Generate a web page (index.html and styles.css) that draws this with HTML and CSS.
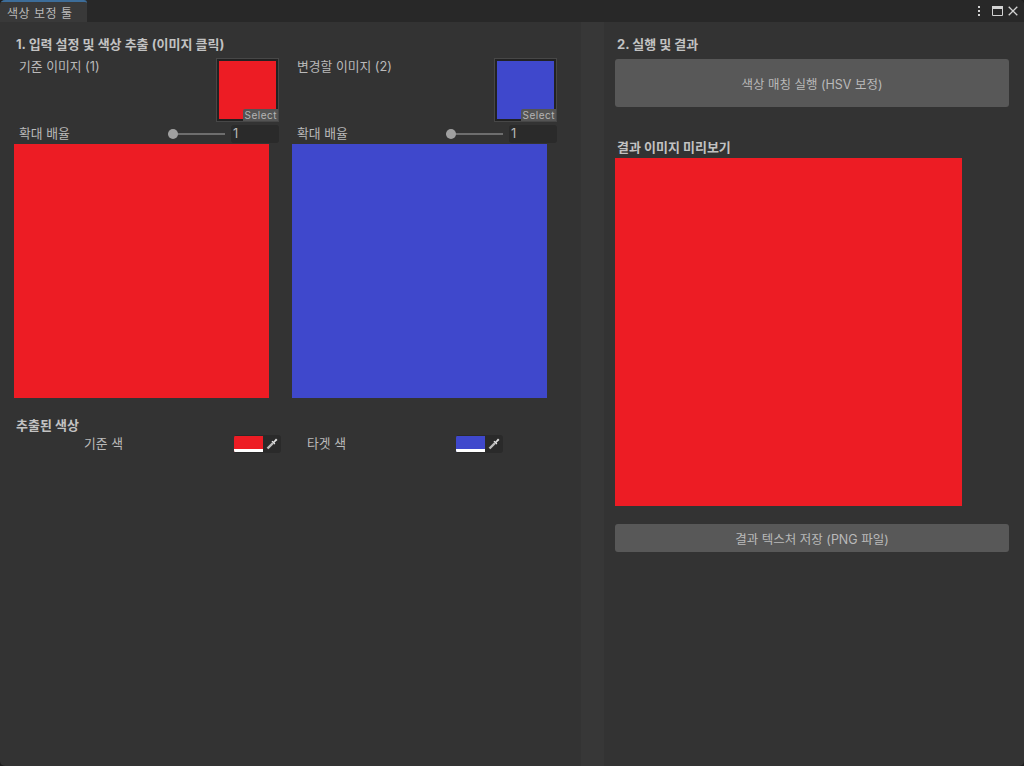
FILE: index.html
```html
<!DOCTYPE html>
<html lang="ko">
<head>
  <meta charset="UTF-8" />
  <title>색상 보정 툴</title>
  <link rel="stylesheet" href="styles.css">
</head>
<body>
  <div class="window">
    <!-- Tab bar -->
    <div class="tabbar">
      <div class="tab">색상 보정 툴</div>
      <div class="tab-actions">
        <svg class="icon-more" width="4" height="10" viewBox="0 0 4 10"><path d="M1 0h2v2H1zM1 4h2v2H1zM1 8h2v2H1z" fill="#d2d2d2"/></svg>
        <svg width="11" height="10" viewBox="0 0 11 10"><path d="M.5.5h10v9H.5z" fill="none" stroke="#d2d2d2"/><path d="M0 0h11v3H0z" fill="#d2d2d2"/></svg>
        <svg width="10" height="10" viewBox="0 0 10 10"><path d="M.7.7l8.600 8.600M9.300.7L.7 9.300" fill="none" stroke="#d2d2d2" stroke-width="1.300"/></svg>
      </div>
    </div>

    <div class="panes">
      <!-- Left pane -->
      <div class="pane-left">
        <h2 class="title">1. 입력 설정 및 색상 추출 (이미지 클릭)</h2>
        <div class="sources">
          <div class="source">
            <div class="field-row">
              <span class="label">기준 이미지 (1)</span>
              <div class="object-field"><div class="thumb red"></div><span class="select">Select</span></div>
            </div>
            <div class="zoom-row">
              <span class="label">확대 배율</span>
              <div class="slider"><span class="knob"></span></div>
              <div class="number">1</div>
            </div>
            <div class="image red"></div>
          </div>
          <div class="source">
            <div class="field-row">
              <span class="label">변경할 이미지 (2)</span>
              <div class="object-field"><div class="thumb blue"></div><span class="select">Select</span></div>
            </div>
            <div class="zoom-row">
              <span class="label">확대 배율</span>
              <div class="slider"><span class="knob"></span></div>
              <div class="number">1</div>
            </div>
            <div class="image blue"></div>
          </div>
        </div>

        <h2 class="title extracted">추출된 색상</h2>
        <div class="colors">
          <div class="color-row first">
            <span class="label">기준 색</span>
            <div class="color-field">
              <div class="swatch red"></div>
              <svg class="picker" width="12" height="12" viewBox="0 0 12 12"><path d="M1.500 10.500L7 5" fill="none" stroke="#bdbdbd" stroke-width="2.400"/><path d="M5.500 3.500l3 3 .8-.8-.7-1.200L11.500 2 10 .5 7.500 3.400l-1.200-.7z" fill="#e0e0e0"/></svg>
            </div>
          </div>
          <div class="color-row second">
            <span class="label">타겟 색</span>
            <div class="color-field">
              <div class="swatch blue"></div>
              <svg class="picker" width="12" height="12" viewBox="0 0 12 12"><path d="M1.500 10.500L7 5" fill="none" stroke="#bdbdbd" stroke-width="2.400"/><path d="M5.500 3.500l3 3 .8-.8-.7-1.200L11.500 2 10 .5 7.500 3.400l-1.200-.7z" fill="#e0e0e0"/></svg>
            </div>
          </div>
        </div>
      </div>

      <div class="gutter"></div>

      <!-- Right pane -->
      <div class="pane-right">
        <h2 class="title">2. 실행 및 결과</h2>
        <button class="btn btn-run">색상 매칭 실행 (HSV 보정)</button>
        <h2 class="title preview-title">결과 이미지 미리보기</h2>
        <div class="preview red"></div>
        <button class="btn btn-save">결과 텍스처 저장 (PNG 파일)</button>
      </div>
    </div>
  </div>
</body>
</html>
```

FILE: styles.css
```css
* {
  margin: 0;
  padding: 0;
  box-sizing: border-box;
  font-family: Inter, "Noto Sans CJK KR", sans-serif;
}

body {
  background: #1e1e1e;
  overflow: hidden;
  color: #bababa;
  font-size: 12.8px;
}

.window {
  width: 1024px;
  height: 766px;
  display: flex;
  flex-direction: column;
  background: #333;
  border-radius: 5px;
  overflow: hidden;
}

.tabbar {
  height: 22px;
  flex: none;
  display: flex;
  justify-content: space-between;
  background: #282828;
}

.tab {
  width: 87px;
  padding: 5px 0 0 7px;
  background: #393939;
  border-top: 2px solid #3d6d99;
  border-top-right-radius: 3px;
  font-size: 12px;
  line-height: 14px;
  letter-spacing: 0.5px;
}

.tab-actions {
  display: flex;
  align-items: center;
  gap: 5px;
  padding-right: 6px;
}

.icon-more {
  margin-right: 6px;
}

.panes {
  flex: 1;
  display: flex;
}

.pane-left {
  width: 581px;
  padding: 15px 0 0 14px;
}

.gutter {
  width: 23px;
  background: #373737;
}

.pane-right {
  flex: 1;
  padding: 15px 15px 0 11px;
}

.title {
  font-size: 13px;
  font-weight: 700;
  line-height: 14px;
  color: #c2c2c2;
  padding-left: 2px;
}

.sources {
  display: flex;
  gap: 13px;
}

.source {
  width: 265px;
}

.label {
  padding-left: 5px;
  line-height: 16px;
}

.field-row {
  display: flex;
  justify-content: space-between;
  height: 66px;
  margin-top: 7px;
}

.field-row .label {
  margin-top: 1px;
}

.object-field {
  position: relative;
  width: 63px;
  height: 64px;
  border: 1px solid #474747;
  padding: 2px;
  background: #222;
}

.thumb {
  height: 100%;
}

.select {
  position: absolute;
  right: 0;
  bottom: 0;
  padding: 0 1px 0 2px;
  background: #545454;
  border-radius: 2px 0 0 0;
  color: #b4b4b4;
  font-size: 10px;
  line-height: 12px;
  letter-spacing: 0.5px;
}

.zoom-row {
  display: flex;
  align-items: center;
  height: 20px;
}

.zoom-row .label {
  width: 154px;
}

.slider {
  position: relative;
  width: 57px;
  height: 2px;
  background: #6e6e6e;
}

.knob {
  position: absolute;
  left: 0;
  top: -4px;
  width: 10px;
  height: 10px;
  border-radius: 50%;
  background: #a0a0a0;
}

.number {
  width: 48px;
  height: 18px;
  margin-left: 6px;
  padding-left: 2px;
  background: #2a2a2a;
  border-radius: 3px;
  line-height: 18px;
}

.image {
  width: 255px;
  height: 254px;
}

.red {
  background: #ed1c24;
}

.blue {
  background: #3f48cc;
}

.extracted {
  margin-top: 20px;
}

.colors {
  display: flex;
  margin-top: 3px;
}

.color-row {
  display: flex;
  align-items: center;
}

.color-row .label {
  padding-left: 0;
  width: 150px;
}

.color-row.first {
  padding-left: 70px;
}

.color-row.second {
  margin-left: 26px;
}

.color-row.second .label {
  width: 149px;
}

.color-field {
  display: flex;
  align-items: center;
  width: 47px;
  height: 18px;
  background: #2a2a2a;
  border-radius: 3px;
  overflow: hidden;
}

.swatch {
  width: 29px;
  height: 16px;
  border-bottom: 3px solid #fff;
}

.picker {
  margin-left: 3px;
}

.btn {
  display: block;
  width: 100%;
  background: #585858;
  border: none;
  border-radius: 3px;
  color: #bababa;
  font-size: 12.5px;
}

.btn-run {
  height: 48px;
  margin-top: 8px;
}

.preview-title {
  margin-top: 33px;
}

.preview {
  width: 347.500px;
  height: 348.500px;
  margin: 3.500px 0 0 -0.500px;
}

.btn-save {
  height: 28px;
  margin-top: 18px;
}
```
